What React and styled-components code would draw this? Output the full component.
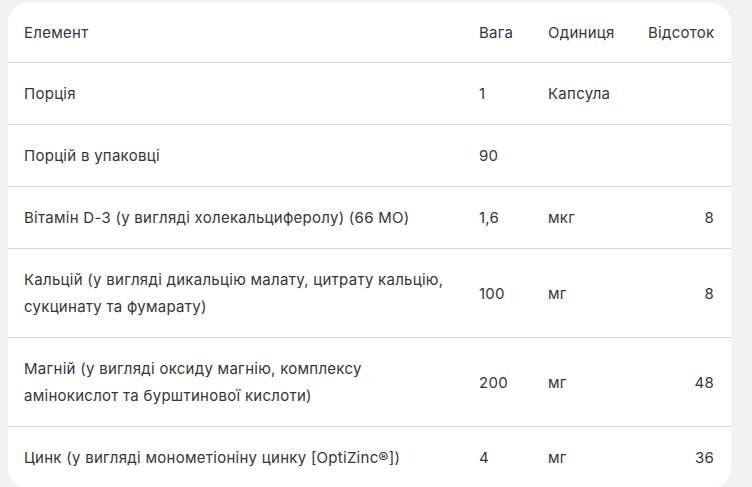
import React from "react";
import styled, { createGlobalStyle } from "styled-components";

const GlobalStyle = createGlobalStyle`
  body {
    margin: 0;
    background: #f2f2f4;
    font-family: Inter, "Noto Sans", sans-serif;
  }
`;

const Page = styled.div`
  padding: 3px 0 0 8px;
  min-height: 484px;
`;

const Card = styled.div`
  width: 723px;
  background: #ffffff;
  border-radius: 20px;
  overflow: hidden;
`;

const Table = styled.table`
  width: 100%;
  border-collapse: collapse;
  table-layout: fixed;
  font-size: 15px;
  line-height: 27px;
  letter-spacing: 0.27px;
  color: #363636;
`;

const Row = styled.tr`
  border-bottom: ${(p) => (p.last ? "none" : "1px solid #d9d9d9")};
`;

const Cell = styled.td`
  padding: ${(p) => (p.head ? "16px 17px 16px 16px" : "17px 17px 17px 16px")};
  text-align: ${(p) => (p.right ? "right" : "left")};
  vertical-align: middle;
  font-weight: 400;
`;

const rows = [
  ["Порція", "1", "Капсула", ""],
  ["Порцій в упаковці", "90", "", ""],
  ["Вітамін D-3 (у вигляді холекальциферолу) (66 МО)", "1,6", "мкг", "8"],
  ["Кальцій (у вигляді дикальцію малату, цитрату кальцію, сукцинату та фумарату)", "100", "мг", "8"],
  ["Магній (у вигляді оксиду магнію, комплексу амінокислот та бурштинової кислоти)", "200", "мг", "48"],
  ["Цинк (у вигляді монометіоніну цинку [OptiZinc®])", "4", "мг", "36"],
];

export default function App() {
  return (
    <>
      <GlobalStyle />
      <Page>
        <Card>
          <Table>
            <colgroup>
              <col style={{ width: 455 }} />
              <col style={{ width: 69 }} />
              <col style={{ width: 100 }} />
              <col style={{ width: 99 }} />
            </colgroup>
            <thead>
              <Row>
                <Cell as="th" head>Елемент</Cell>
                <Cell as="th" head>Вага</Cell>
                <Cell as="th" head>Одиниця</Cell>
                <Cell as="th" head right>Відсоток</Cell>
              </Row>
            </thead>
            <tbody>
              {rows.map((r, i) => (
                <Row key={i} last={i === rows.length - 1}>
                  <Cell>{r[0]}</Cell>
                  <Cell>{r[1]}</Cell>
                  <Cell>{r[2]}</Cell>
                  <Cell right>{r[3]}</Cell>
                </Row>
              ))}
            </tbody>
          </Table>
        </Card>
      </Page>
    </>
  );
}
